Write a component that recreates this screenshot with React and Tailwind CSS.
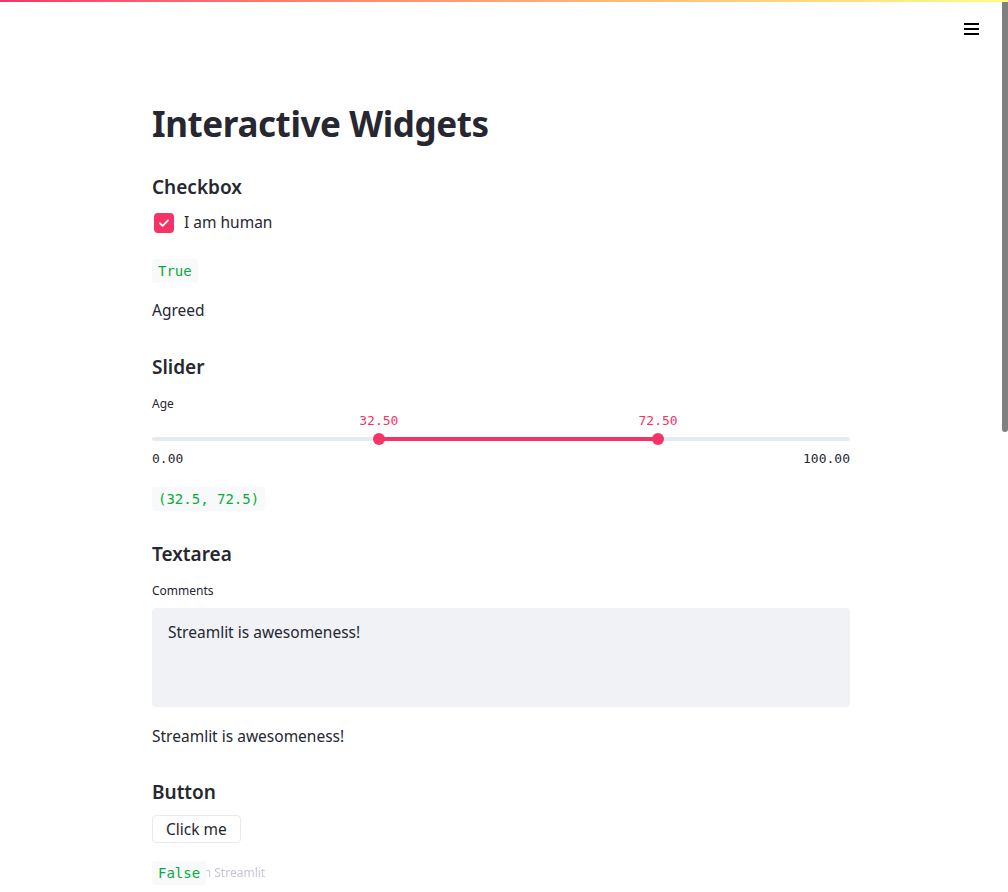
const sans = { fontFamily: '"Noto Sans", "Open Sans", sans-serif' };

const Code = ({ children }) => (
  <code className="inline-block rounded px-[6px] h-[24px] leading-[24px] bg-[#f8f9fb] text-[14px] text-[#09ab3b] font-['DejaVu_Sans_Mono',monospace]">
    {children}
  </code>
);

const Heading = ({ children, className = '' }) => (
  <h3 className={`text-[19px] leading-[28px] font-semibold text-[#262730] ${className}`}>{children}</h3>
);

const RangeSlider = ({ low, high, min = 0, max = 100 }) => {
  const lo = ((low - min) / (max - min)) * 100;
  const hi = ((high - min) / (max - min)) * 100;
  const mono = "font-['DejaVu_Sans_Mono',monospace] text-[13px] leading-[16px]";
  return (
    <div className="flex flex-col">
      {/* value bubbles follow the thumbs */}
      <div className={`relative h-[18px] text-[#f63366] ${mono}`}>
        <span className="absolute top-[1px] -translate-x-1/2" style={{ left: `${lo}%` }}>{low.toFixed(2)}</span>
        <span className="absolute top-[1px] -translate-x-1/2" style={{ left: `${hi}%` }}>{high.toFixed(2)}</span>
      </div>
      <div className="pt-[7px] pb-[5px]">
        <div className="relative h-[4px] rounded bg-[#e6eaf1]">
          <div className="absolute inset-y-0 bg-[#f63366]" style={{ left: `${lo}%`, width: `${hi - lo}%` }} />
          <div className="absolute -top-[4px] w-[12px] h-[12px] -ml-[6px] rounded-full bg-[#f63366]" style={{ left: `${lo}%` }} />
          <div className="absolute -top-[4px] w-[12px] h-[12px] -ml-[6px] rounded-full bg-[#f63366]" style={{ left: `${hi}%` }} />
        </div>
      </div>
      <div className={`mt-[5px] flex justify-between text-[#262730] ${mono}`}>
        <span>{min.toFixed(2)}</span>
        <span>{max.toFixed(2)}</span>
      </div>
    </div>
  );
};

export default function App() {
  const comment = 'Streamlit is awesomeness!';
  return (
    <div className="min-h-[892px] bg-white text-[#262730]" style={sans}>
      <div className="h-[2px] bg-gradient-to-r from-[#f63366] to-[#fffd80]" />
      <div className="flex">
        <div className="flex-1 flex flex-col">
          <header className="flex justify-end pr-[23px] pt-[20px]">
            <svg width="15" height="14" viewBox="0 0 15 14">
              <rect x="0" y="1" width="15" height="2" fill="#000" />
              <rect x="0" y="6" width="15" height="2" fill="#000" />
              <rect x="0" y="11" width="15" height="2" fill="#000" />
            </svg>
          </header>

          <main className="mx-auto w-[698px] pt-[64px] pb-[40px] flex flex-col items-start">
            <h1 className="text-[35px] leading-[48px] font-bold tracking-[-0.4px]">Interactive Widgets</h1>

            <Heading className="mt-[25px]">Checkbox</Heading>
            <label className="mt-[10px] flex items-center gap-[10px] h-[24px] text-[15.5px]">
              <span className="ml-[2px] w-[20px] h-[20px] rounded-[4px] bg-[#f63366] flex items-center justify-center">
                <svg width="12" height="12" viewBox="0 0 12 12" fill="none">
                  <path d="M2 6.3l2.6 2.6L10 3.3" stroke="#fff" strokeWidth="1.8" strokeLinecap="round" strokeLinejoin="round" />
                </svg>
              </span>
              I am human
            </label>
            <div className="mt-[23px]"><Code>True</Code></div>
            <p className="mt-[15px] text-[15.5px] leading-[24px]">Agreed</p>

            <Heading className="mt-[31px]">Slider</Heading>
            <p className="mt-[15px] text-[12px] leading-[16px]">Age</p>
            <div className="self-stretch"><RangeSlider low={32.5} high={72.5} /></div>
            <div className="mt-[19px]"><Code>(32.5, 72.5)</Code></div>

            <Heading className="mt-[29px]">Textarea</Heading>
            <p className="mt-[15px] text-[12px] leading-[16px]">Comments</p>
            <div className="self-stretch mt-[9px] h-[99px] rounded-[4px] bg-[#f0f2f6] px-[16px] py-[12px] text-[15.5px] leading-[24px]">
              {comment}
            </div>
            <p className="mt-[17px] text-[15.5px] leading-[24px]">{comment}</p>

            <Heading className="mt-[30px]">Button</Heading>
            <button className="mt-[9px] h-[28px] px-[13px] rounded-[4px] border border-[#e6eaf1] bg-white text-[15.5px] leading-[24px]">
              Click me
            </button>
            <div className="mt-[17px] relative z-10"><Code>False</Code></div>
          </main>

          <footer className="fixed bottom-[9px] left-[152px] text-[12px] leading-[20px] text-[#c4c6d0]">
            Made with Streamlit
          </footer>
        </div>
        <div className="w-[6px]">
          <div className="h-[430px] rounded-b-[3px] bg-[#808080]" />
        </div>
      </div>
    </div>
  );
}
